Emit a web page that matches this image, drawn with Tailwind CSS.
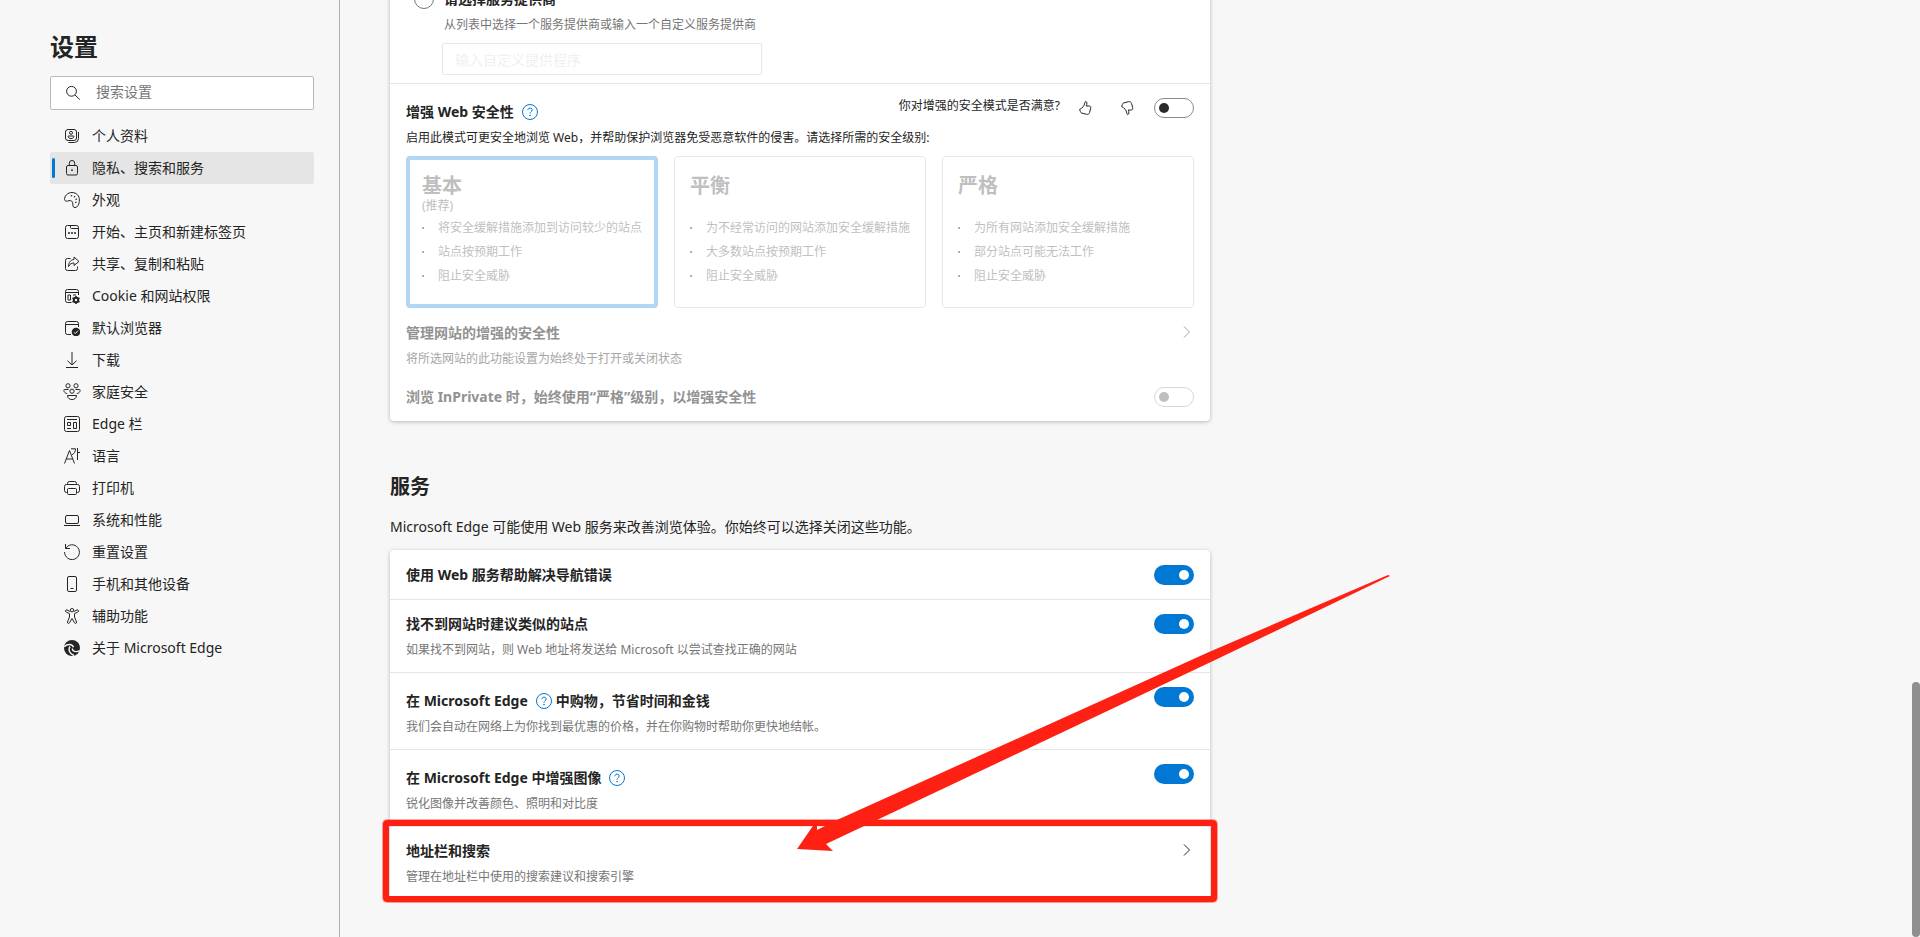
<!DOCTYPE html>
<html lang="zh-CN">
<head>
  <meta charset="UTF-8">
  <meta name="viewport" content="width=device-width, initial-scale=1.0">
  <title>设置</title>
  <script src="https://cdn.jsdelivr.net/npm/@tailwindcss/browser@4"></script>
</head>
<body class="flex min-h-screen bg-[#f7f7f7] font-['Noto_Sans','Noto_Sans_CJK_SC',sans-serif] text-sm leading-5 text-[#242424]">

  <!-- Sidebar -->
  <aside class="w-[340px] shrink-0 border-r border-[#b0b0b0] pt-[29px] pr-[25px] pl-[50px]">
    <h1 class="text-2xl leading-9 font-bold">设置</h1>
    <div class="mt-[11px] flex h-[34px] items-center gap-[15px] rounded-xs border border-[#bababa] bg-white pl-[14px]">
      <svg class="size-4 shrink-0" viewBox="0 0 16 16" fill="none" stroke="currentColor"><circle cx="6.5" cy="6.3" r="4.9"/><path d="M10 10l4.8 4.6"/></svg>
      <input type="search" aria-label="搜索设置" placeholder="搜索设置" class="min-w-0 flex-1 pb-[2px] outline-none placeholder:text-[#767676]">
    </div>

    <nav class="mt-[10px]">
      <a href="#profiles" class="flex h-8 items-center gap-3 pl-[14px]">
        <svg class="size-4" viewBox="0 0 16 16" fill="none" stroke="currentColor"><rect x="1.5" y="1.5" width="11" height="11" rx="2.5"/><circle cx="7" cy="4.8" r="1.5"/><path d="M4.2 8h5.6v.6c0 2.6-5.6 2.6-5.6 0zM14.500 4v6.500a4 4 0 0 1-4 4H4.500"/></svg>
        个人资料
      </a>
      <a href="#privacy" aria-current="page" class="flex h-8 items-center rounded-xs bg-[#e5e5e5] pl-[2px]">
        <span class="h-5 w-[3px] rounded-sm bg-[#0078d4]"></span>
        <svg class="mr-3 ml-[9px] size-4" viewBox="0 0 16 16" fill="none" stroke="currentColor"><rect x="2.500" y="5.500" width="11" height="9.500" rx="1.500"/><path d="M5.300 5.500V3.200a2.700 2.700 0 0 1 5.400 0v2.300"/><circle cx="8" cy="10.200" r=".9" fill="currentColor" stroke="none"/></svg>
        隐私、搜索和服务
      </a>
      <a href="#appearance" class="flex h-8 items-center gap-3 pl-[14px]">
        <svg class="size-4" viewBox="0 0 16 16" fill="none" stroke="currentColor"><path d="M.6 7.600C.2 4 3.600.5 8 .5c4.400 0 7.400 3.300 7.400 7.400 0 4-1.600 7.600-4.300 7.600-3.800 0-1.200-4.800-3.300-6.300C5.800 7.700 4.200 9.200 2.600 9.200 1.400 9.200.8 8.600.6 7.600z"/><g fill="currentColor" stroke="none"><circle cx="7.500" cy="3.800" r=".8"/><circle cx="10.500" cy="4.800" r=".8"/><circle cx="12.200" cy="7.300" r=".8"/><circle cx="11.800" cy="10.300" r=".8"/></g></svg>
        外观
      </a>
      <a href="#start" class="flex h-8 items-center gap-3 pl-[14px]">
        <svg class="size-4" viewBox="0 0 16 16" fill="none" stroke="currentColor"><rect x="1.500" y="1.500" width="13" height="13" rx="2"/><path d="M6.500 1.500v2a1 1 0 0 0 1 1h7"/><g fill="currentColor" stroke="none"><circle cx="5" cy="9" r="1"/><circle cx="8" cy="9" r="1"/><circle cx="11" cy="9" r="1"/></g></svg>
        开始、主页和新建标签页
      </a>
      <a href="#share" class="flex h-8 items-center gap-3 pl-[14px]">
        <svg class="size-4" viewBox="0 0 16 16" fill="none" stroke="currentColor" stroke-linejoin="round"><path d="M6.500 2.500H3.500a2 2 0 0 0-2 2v8a2 2 0 0 0 2 2h8a2 2 0 0 0 2-2v-2"/><path d="M10 1l5 4.500-5 4V7C7.500 7 6 8 4.500 10.500 4.700 6.500 6.500 3.800 10 3.500z"/></svg>
        共享、复制和粘贴
      </a>
      <a href="#cookies" class="flex h-8 items-center gap-3 pl-[14px]">
        <svg class="size-4" viewBox="0 0 16 16" fill="none" stroke="currentColor"><path d="M7.500 14.500h-4a2 2 0 0 1-2-2v-9a2 2 0 0 1 2-2h9a2 2 0 0 1 2 2V7M1.500 4.500h13M4 7h2.500v5H4zM9 7h3"/><circle cx="12" cy="12" r="2.200" stroke-width="2"/><path d="M12 8v1.500M12 14.500V16M8.500 10l1.400.8M14.100 13.200l1.400.8M8.500 14l1.400-.8M14.100 10.800l1.400-.8" stroke-width="1.600"/></svg>
        Cookie 和网站权限
      </a>
      <a href="#default" class="flex h-8 items-center gap-3 pl-[14px]">
        <svg class="size-4" viewBox="0 0 16 16" fill="none" stroke="currentColor"><path d="M7 14.500H3.500a2 2 0 0 1-2-2v-9a2 2 0 0 1 2-2h9a2 2 0 0 1 2 2V7M1.500 4.500h13"/><circle cx="12" cy="12" r="4.300" fill="currentColor" stroke="none"/><path d="M10 12.300l1.300 1.300 2.700-3" stroke="#f7f7f7"/></svg>
        默认浏览器
      </a>
      <a href="#downloads" class="flex h-8 items-center gap-3 pl-[14px]">
        <svg class="size-4" viewBox="0 0 16 16" fill="none" stroke="currentColor"><path d="M8 0v13M3.500 8.700L8 13l4.500-4.300M2 15.500h12"/></svg>
        下载
      </a>
      <a href="#family" class="flex h-8 items-center gap-3 pl-[14px]">
        <svg class="size-4 overflow-visible" viewBox="0 0 16 16" fill="none" stroke="currentColor"><circle cx="4" cy="1.800" r="2.100"/><circle cx="12" cy="1.800" r="2.100"/><circle cx="8" cy="7.200" r="2.100"/><path d="M4.500 5.500H.5c-1.200 0-.9 3.800 2.800 4M11.500 5.500h4c1.200 0 .9 3.800-2.800 4M3.500 11.500h9c0 5.400-9 5.400-9 0z"/></svg>
        家庭安全
      </a>
      <a href="#edgebar" class="flex h-8 items-center gap-3 pl-[14px]">
        <svg class="size-4" viewBox="0 0 16 16" fill="none" stroke="currentColor"><rect x=".5" y=".5" width="15" height="15" rx="2"/><path d="M3 3.500h10M3.500 6.500h3v3h-3zM9.500 6.500h3v6h-3zM3 12.500h4"/></svg>
        Edge 栏
      </a>
      <a href="#languages" class="flex h-8 items-center gap-3 pl-[14px]">
        <svg class="size-4" viewBox="0 0 16 16" fill="none" stroke="currentColor"><path d="M.5 15.500L5.500 2.500l5 13M2.300 11h6.400M7 .8h4.500c0 3-1.200 4.800-3.500 6M13.500 0v12M13.500 4.500H16"/></svg>
        语言
      </a>
      <a href="#printers" class="flex h-8 items-center gap-3 pl-[14px]">
        <svg class="size-4" viewBox="0 0 16 16" fill="none" stroke="currentColor"><path d="M3.500 12.500h-1a2 2 0 0 1-2-2v-4a2 2 0 0 1 2-2h11a2 2 0 0 1 2 2v4a2 2 0 0 1-2 2h-1M3.500 4.500v-1a2 2 0 0 1 2-2h5a2 2 0 0 1 2 2v1"/><rect x="3.500" y="8.500" width="9" height="6" rx="1"/></svg>
        打印机
      </a>
      <a href="#system" class="flex h-8 items-center gap-3 pl-[14px]">
        <svg class="size-4" viewBox="0 0 16 16" fill="none" stroke="currentColor"><rect x="1.500" y="3.500" width="13" height="8" rx="1.500"/><path d="M0 13.500h16"/></svg>
        系统和性能
      </a>
      <a href="#reset" class="flex h-8 items-center gap-3 pl-[14px]">
        <svg class="size-4" viewBox="0 0 16 16" fill="none" stroke="currentColor"><path d="M1.500 0v4.500H6M1.700 4.300A7.400 7.400 0 1 1 .6 8"/></svg>
        重置设置
      </a>
      <a href="#phone" class="flex h-8 items-center gap-3 pl-[14px]">
        <svg class="size-4" viewBox="0 0 16 16" fill="none" stroke="currentColor"><rect x="3.500" y=".5" width="9" height="15" rx="1.500"/><path d="M6.500 12.500h3"/></svg>
        手机和其他设备
      </a>
      <a href="#accessibility" class="flex h-8 items-center gap-3 pl-[14px]">
        <svg class="size-4" viewBox="0 0 16 16" fill="none" stroke="currentColor" stroke-linejoin="round"><circle cx="8" cy="2.200" r="1.700"/><path d="M6.300 3.500L3 2C1.300 1.400.8 3.300 2.200 4L5.500 5.600V9l-2 5c-.4 1.500 1.400 2 2 .8L8 10.500l2.500 4.300c.6 1.200 2.400.7 2-.8l-2-5V5.600L13.800 4c1.400-.7.9-2.600-.8-2L9.700 3.500"/></svg>
        辅助功能
      </a>
      <a href="#about" class="flex h-8 items-center gap-3 pl-[14px]">
        <svg class="size-4" viewBox="0 0 16 16" fill="none"><circle cx="8" cy="8" r="8" fill="currentColor"/><path d="M.2 6.800C3 3.600 8.500 3.800 9.400 7.200M6 6.500c-2 2.800-.6 7.500 4 9M8.500 8.500c-.6 2.800 3.500 4.300 7.300 2" stroke="#f7f7f7" stroke-width="1.400"/></svg>
        关于 Microsoft Edge
      </a>
    </nav>
  </aside>

  <!-- Settings content -->
  <main class="min-w-0 flex-1 overflow-hidden pr-5 pl-[50px]">
    <div class="max-w-[820px]">

      <section class="-mt-[11px] rounded-b-sm bg-white shadow-[0_1px_4px_rgba(0,0,0,0.25)]">
        <div class="border-b border-[#e5e5e5] pb-2 pl-6">
          <label class="flex items-center gap-[10px] font-bold">
            <input type="radio" name="dns" class="size-5 appearance-none rounded-full border border-[#767676]">
            请选择服务提供商
          </label>
          <p class="mt-[6px] ml-[30px] text-xs leading-5 text-[#767676]">从列表中选择一个服务提供商或输入一个自定义服务提供商</p>
          <input type="text" disabled aria-label="输入自定义提供程序" placeholder="输入自定义提供程序" class="mt-2 ml-7 block h-8 w-80 rounded-xs border border-[#e8e8e8] px-3 placeholder:text-[#f0f0f0]">
        </div>

        <div class="px-4 pt-[14px] pb-[14px]">
          <div class="flex items-start">
            <h2 class="flex items-center gap-2 pt-1 font-bold">
              <label for="enhance">增强 Web 安全性</label>
              <svg class="size-4" viewBox="0 0 16 16" fill="none" stroke="#0078d4"><circle cx="8" cy="8" r="7.500"/><path d="M5.900 6.200c0-2.800 4.300-2.700 4.300-.2 0 1.700-2.200 1.800-2.200 3.600"/><circle cx="8" cy="11.500" r=".8" fill="#0078d4" stroke="none"/></svg>
            </h2>
            <div class="ml-auto flex items-center">
              <span class="pb-1 text-xs leading-4">你对增强的安全模式是否满意?</span>
              <button type="button" aria-label="满意" class="ml-[17px]">
                <svg class="size-4" viewBox="0 0 16 16" fill="none" stroke="currentColor" stroke-linejoin="round"><path d="M8.600 1.500c1.600 0 1.600 2.300.7 4.500h2.900c1.400 0 1.800 1 1.500 2.200l-1.100 4.300c-.4 1.500-1.600 2.100-3 1.800l-4.800-1.200c-.8-.2-1.200-.8-1.400-1.500l-.8-2.200c2.700-1.200 4.700-3.400 5.200-6.400.1-.8.2-1.500.8-1.500z"/></svg>
              </button>
              <button type="button" aria-label="不满意" class="mr-[19px] ml-[26px]">
                <svg class="size-4" viewBox="0 0 16 16" fill="none" stroke="currentColor" stroke-linejoin="round"><path d="M8.600 14.500c1.600 0 1.600-2.300.7-4.500h2.900c1.400 0 1.800-1 1.500-2.200l-1.100-4.300c-.4-1.500-1.600-2.100-3-1.800L4.800 2.900c-.8.200-1.200.8-1.400 1.500l-.8 2.200c2.700 1.200 4.700 3.400 5.200 6.400.1.800.2 1.500.8 1.500z"/></svg>
              </button>
              <input id="enhance" type="checkbox" role="switch" class="flex h-5 w-10 appearance-none items-center rounded-full border border-[#8a8a8a] px-1 before:size-[10px] before:rounded-full before:bg-[#2b2b2b] before:content-['']">
            </div>
          </div>

          <p class="mt-[6px] text-xs leading-5">启用此模式可更安全地浏览 Web，并帮助保护浏览器免受恶意软件的侵害。请选择所需的安全级别:</p>

          <div class="mt-2 grid grid-cols-3 gap-4 text-[#bfbfbf]">
            <div class="h-38 rounded-sm border-4 border-[#b3d6f2] px-3 pt-[14px]">
              <h3 class="text-xl leading-6 font-bold">基本</h3>
              <p class="h-4 text-xs leading-4">(推荐)</p>
              <ul class="mt-[2px] text-xs leading-6">
                <li class="flex items-center gap-[14px] whitespace-nowrap before:size-[2px] before:bg-[#b0b0b0] before:content-['']">将安全缓解措施添加到访问较少的站点</li>
                <li class="flex items-center gap-[14px] whitespace-nowrap before:size-[2px] before:bg-[#b0b0b0] before:content-['']">站点按预期工作</li>
                <li class="flex items-center gap-[14px] whitespace-nowrap before:size-[2px] before:bg-[#b0b0b0] before:content-['']">阻止安全威胁</li>
              </ul>
            </div>
            <div class="h-38 rounded-sm border border-[#e8e8e8] px-[15px] pt-[17px]">
              <h3 class="text-xl leading-6 font-bold">平衡</h3>
              <ul class="mt-[18px] text-xs leading-6">
                <li class="flex items-center gap-[14px] whitespace-nowrap before:size-[2px] before:bg-[#b0b0b0] before:content-['']">为不经常访问的网站添加安全缓解措施</li>
                <li class="flex items-center gap-[14px] whitespace-nowrap before:size-[2px] before:bg-[#b0b0b0] before:content-['']">大多数站点按预期工作</li>
                <li class="flex items-center gap-[14px] whitespace-nowrap before:size-[2px] before:bg-[#b0b0b0] before:content-['']">阻止安全威胁</li>
              </ul>
            </div>
            <div class="h-38 rounded-sm border border-[#e8e8e8] px-[15px] pt-[17px]">
              <h3 class="text-xl leading-6 font-bold">严格</h3>
              <ul class="mt-[18px] text-xs leading-6">
                <li class="flex items-center gap-[14px] whitespace-nowrap before:size-[2px] before:bg-[#b0b0b0] before:content-['']">为所有网站添加安全缓解措施</li>
                <li class="flex items-center gap-[14px] whitespace-nowrap before:size-[2px] before:bg-[#b0b0b0] before:content-['']">部分站点可能无法工作</li>
                <li class="flex items-center gap-[14px] whitespace-nowrap before:size-[2px] before:bg-[#b0b0b0] before:content-['']">阻止安全威胁</li>
              </ul>
            </div>
          </div>

          <div class="mt-[15px] flex items-start justify-between text-[#929292]">
            <div>
              <h3 class="font-bold">管理网站的增强的安全性</h3>
              <p class="mt-[6px] text-xs leading-5 text-[#a6a6a6]">将所选网站的此功能设置为始终处于打开或关闭状态</p>
            </div>
            <button type="button" disabled aria-label="管理网站的增强的安全性" class="pt-px">
              <svg class="size-4" viewBox="0 0 16 16" fill="none" stroke="#a6a6a6"><path d="M6 2.500L11.500 8 6 13.500"/></svg>
            </button>
          </div>

          <div class="mt-[18px] flex items-center justify-between text-[#929292]">
            <label for="inprivate" class="font-bold">浏览 InPrivate 时，始终使用“严格”级别，以增强安全性</label>
            <input id="inprivate" type="checkbox" role="switch" disabled class="flex h-5 w-10 appearance-none items-center rounded-full border border-[#d8d8d8] px-1 before:size-[10px] before:rounded-full before:bg-[#bfbfbf] before:content-['']">
          </div>
        </div>
      </section>

      <h2 class="mt-13 text-xl leading-7 font-bold">服务</h2>
      <p class="mt-4 leading-5">Microsoft Edge 可能使用 Web 服务来改善浏览体验。你始终可以选择关闭这些功能。</p>

      <section class="mt-[13px] rounded-sm bg-white shadow-[0_1px_4px_rgba(0,0,0,0.25)]">
        <div class="flex h-[50px] items-start justify-between border-b border-[#e5e5e5] px-4 pt-[15px]">
          <label for="nav-errors" class="font-bold">使用 Web 服务帮助解决导航错误</label>
          <input id="nav-errors" type="checkbox" role="switch" checked class="flex h-5 w-10 appearance-none items-center justify-end rounded-full bg-[#0078d4] px-[5px] before:size-[10px] before:rounded-full before:bg-white before:content-['']">
        </div>

        <div class="flex h-[73px] items-start justify-between border-b border-[#e5e5e5] px-4 pt-[14px]">
          <div>
            <label for="similar" class="block font-bold">找不到网站时建议类似的站点</label>
            <p class="mt-[6px] text-xs leading-5 text-[#767676]">如果找不到网站，则 Web 地址将发送给 Microsoft 以尝试查找正确的网站</p>
          </div>
          <input id="similar" type="checkbox" role="switch" checked class="flex h-5 w-10 appearance-none items-center justify-end rounded-full bg-[#0078d4] px-[5px] before:size-[10px] before:rounded-full before:bg-white before:content-['']">
        </div>

        <div class="flex h-[77px] items-start justify-between border-b border-[#e5e5e5] px-4 pt-[14px]">
          <div class="pt-1">
            <label for="shopping" class="flex items-center font-bold">
              在 Microsoft Edge
              <svg class="mr-1 ml-2 size-4" viewBox="0 0 16 16" fill="none" stroke="#0078d4"><circle cx="8" cy="8" r="7.500"/><path d="M5.900 6.200c0-2.800 4.300-2.700 4.300-.2 0 1.700-2.200 1.800-2.200 3.600"/><circle cx="8" cy="11.500" r=".8" fill="#0078d4" stroke="none"/></svg>
              中购物，节省时间和金钱
            </label>
            <p class="mt-[6px] text-xs leading-5 text-[#767676]">我们会自动在网络上为你找到最优惠的价格，并在你购物时帮助你更快地结帐。</p>
          </div>
          <input id="shopping" type="checkbox" role="switch" checked class="flex h-5 w-10 appearance-none items-center justify-end rounded-full bg-[#0078d4] px-[5px] before:size-[10px] before:rounded-full before:bg-white before:content-['']">
        </div>

        <div class="flex h-[77px] items-start justify-between border-b border-[#e5e5e5] px-4 pt-[14px]">
          <div class="pt-1">
            <label for="images" class="flex items-center gap-2 font-bold">
              在 Microsoft Edge 中增强图像
              <svg class="size-4" viewBox="0 0 16 16" fill="none" stroke="#0078d4"><circle cx="8" cy="8" r="7.500"/><path d="M5.900 6.200c0-2.800 4.300-2.700 4.300-.2 0 1.700-2.200 1.800-2.200 3.600"/><circle cx="8" cy="11.500" r=".8" fill="#0078d4" stroke="none"/></svg>
            </label>
            <p class="mt-[6px] text-xs leading-5 text-[#767676]">锐化图像并改善颜色、照明和对比度</p>
          </div>
          <input id="images" type="checkbox" role="switch" checked class="flex h-5 w-10 appearance-none items-center justify-end rounded-full bg-[#0078d4] px-[5px] before:size-[10px] before:rounded-full before:bg-white before:content-['']">
        </div>

        <div class="relative flex h-[72px] items-start justify-between px-4 pt-[14px]">
          <div>
            <h3 class="font-bold">地址栏和搜索</h3>
            <p class="mt-[6px] text-xs leading-5 text-[#767676]">管理在地址栏中使用的搜索建议和搜索引擎</p>
          </div>
          <button type="button" aria-label="地址栏和搜索" class="pt-px">
            <svg class="size-4" viewBox="0 0 16 16" fill="none" stroke="currentColor"><path d="M6 2.500L11.500 8 6 13.500"/></svg>
          </button>

          <!-- Highlight frame and arrow -->
          <div class="pointer-events-none absolute -inset-x-[7px] -top-[7px] -bottom-[3px] rounded-sm border-6 border-[#ff2014] shadow-[0_0_0_1px_rgba(255,32,20,0.4)]"></div>
          <svg class="pointer-events-none absolute bottom-[46px] left-[407px] h-[278px] w-[593px]" viewBox="0 0 593 278" fill="#ff2014"><path d="M0 274L20 245v10l20-10L412 77 591 0l2 1L416 86 82 244 29 269l7 7z"/></svg>
        </div>
      </section>
    </div>
  </main>

  <!-- Scroll thumb -->
  <div class="fixed right-0 bottom-0 h-[255px] w-2 rounded-full bg-[#8f8f8f]"></div>
</body>
</html>
